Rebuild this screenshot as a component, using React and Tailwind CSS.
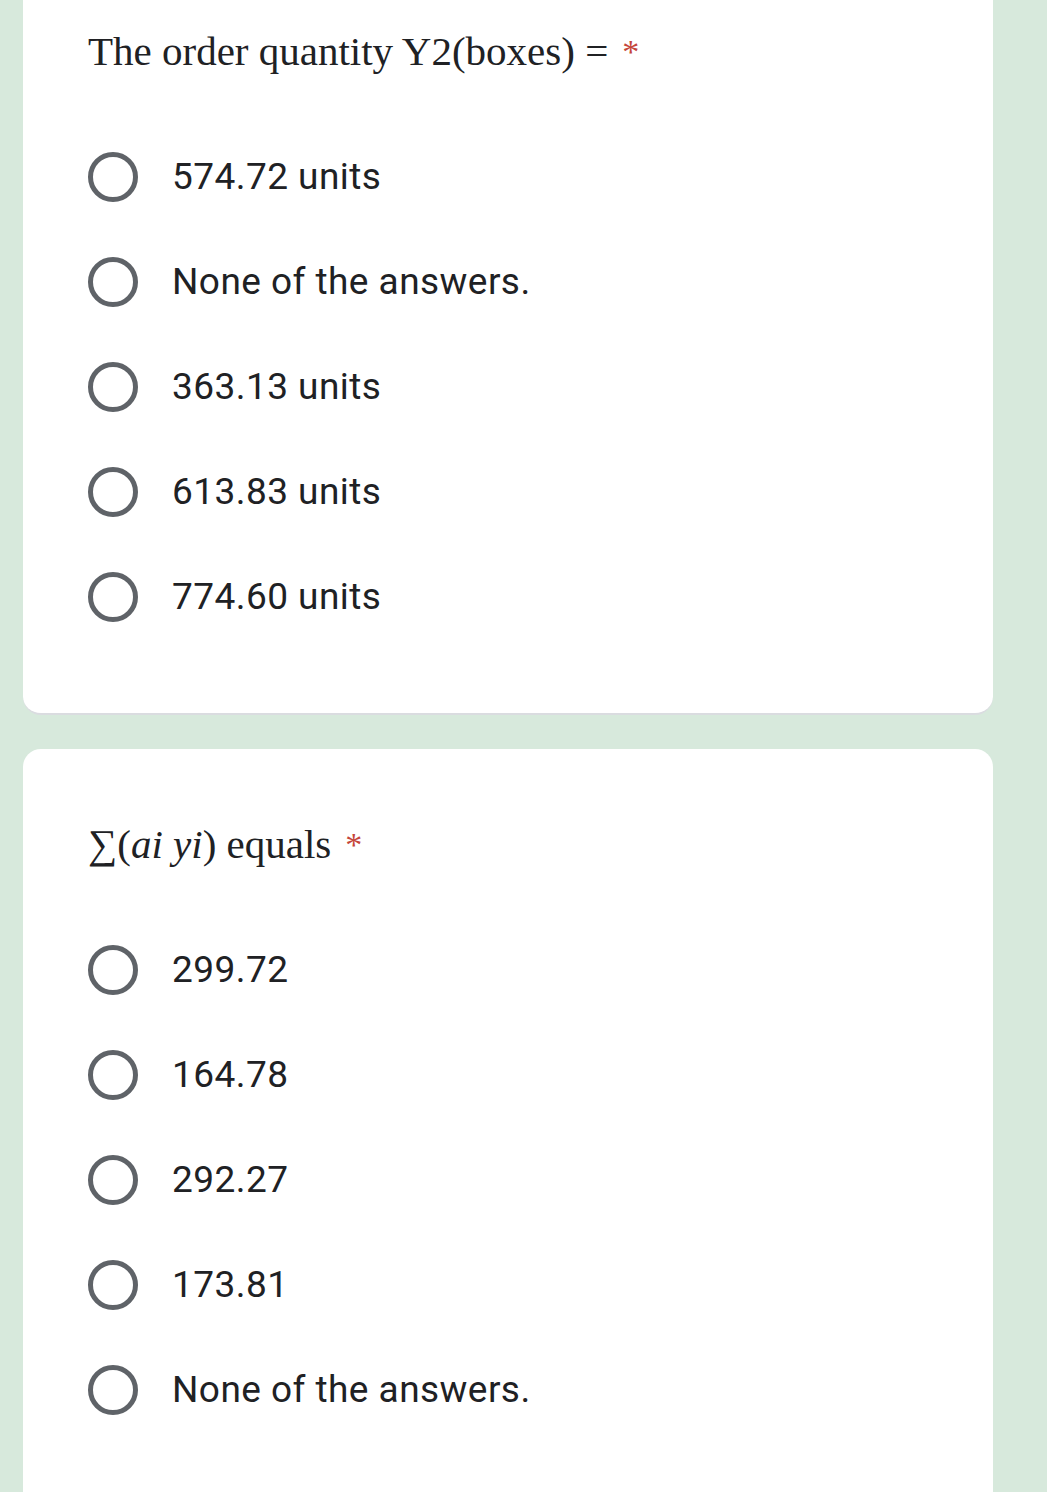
import React from 'react';

const serif = { fontFamily: '"Liberation Serif", "DejaVu Serif", serif' };
const sans = { fontFamily: 'Roboto, "Noto Sans", sans-serif' };

function Radio({ label }) {
  return (
    <div className="flex items-center h-[105px]">
      <span className="block w-[50px] h-[50px] rounded-full border-[5px] border-[#5f6368] shrink-0"></span>
      <span className="ml-[34px] text-[37px] leading-none tracking-[0.45px] text-[#202124]" style={sans}>
        {label}
      </span>
    </div>
  );
}

function Question({ title, options, className }) {
  return (
    <div className={`bg-white rounded-[18px] border-b-2 border-[#dadce0] pt-[66px] pl-[65px] pr-[40px] ${className}`}>
      <div className="h-[60px] flex items-center text-[41px] text-[#202124]" style={serif}>
        {title}
        <span className="ml-[14px] text-[34px] text-[#c5453a] self-start mt-[4px]" style={serif}>*</span>
      </div>
      <div className="mt-[42px]">
        {options.map((o, i) => (
          <Radio key={i} label={o} />
        ))}
      </div>
    </div>
  );
}

export default function App() {
  return (
    <div className="w-[1047px] h-[1492px] overflow-hidden bg-[#d7e9dc] pl-[23px] pr-[54px]">
      <Question
        className="-mt-[44px] pb-[64px]"
        title={<span>The order quantity Y2(boxes) =</span>}
        options={['574.72 units', 'None of the answers.', '363.13 units', '613.83 units', '774.60 units']}
      />
      <Question
        className="mt-[34px] pb-[120px]"
        title={
          <span>
            ∑(<i>ai yi</i>) equals
          </span>
        }
        options={['299.72', '164.78', '292.27', '173.81', 'None of the answers.']}
      />
    </div>
  );
}
